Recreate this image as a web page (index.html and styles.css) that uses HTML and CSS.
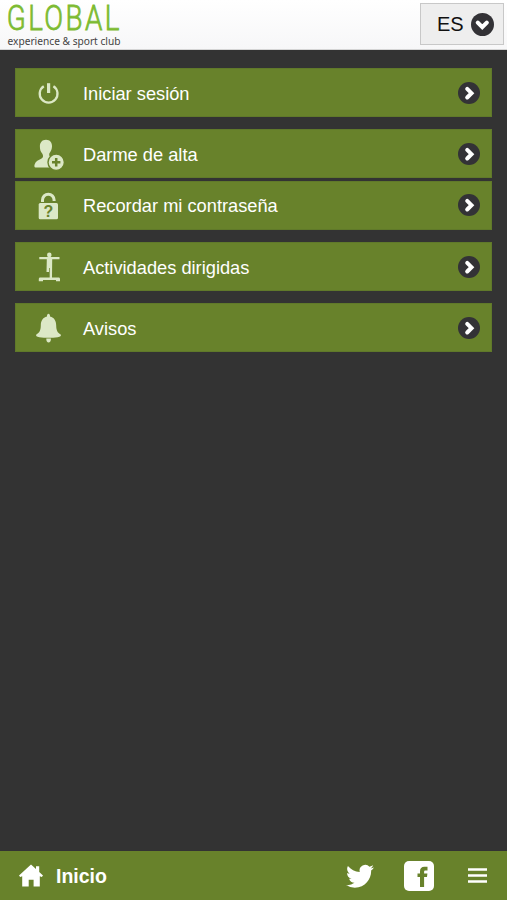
FILE: index.html
```html
<!DOCTYPE html>
<html lang="es">
<head>
<meta charset="utf-8">
<title>Global experience &amp; sport club</title>
<link rel="stylesheet" href="styles.css">
</head>
<body>
<svg width="0" height="0" class="defs">
  <symbol id="arrow" viewBox="0 0 22 22">
    <circle cx="11" cy="11" r="11" fill="#333236"/>
    <path d="M9.200 6.900l4.300 4.300-4.300 4.300" fill="none" stroke="#fff" stroke-width="4" stroke-linecap="round"/>
  </symbol>
</svg>
<header class="header">
  <svg class="logo" width="124" height="50" viewBox="0 0 124 50">
    <text class="logo-name" x="6.800" y="29.800" textLength="115" lengthAdjust="spacingAndGlyphs">GLOBAL</text>
    <text class="logo-tag" x="7.500" y="44.500" textLength="113" lengthAdjust="spacingAndGlyphs">experience &amp; sport club</text>
  </svg>
  <button class="lang">ES
    <svg width="23" height="23" viewBox="0 0 22 22"><g transform="rotate(90 11 11)"><use href="#arrow" width="22" height="22"/></g></svg>
  </button>
</header>
<main class="menu">
  <a class="row">
    <svg class="icon" width="34" height="34" viewBox="0 0 34 34" fill="none" stroke="#dce8c6" stroke-width="2.300"><path d="M11.800 9.200a8.900 8.900 0 1 0 9.600 0"/><path d="M16.600 6.200v9.800" stroke-width="3.200"/></svg>
    <span>Iniciar sesión</span><svg class="go"><use href="#arrow"/></svg>
  </a>
  <a class="row">
    <svg class="icon" width="34" height="34" viewBox="0 0 34 34" fill="#dce8c6"><path d="M14 1.700c4 0 6.300 2.800 6 7-.2 3.400-1.600 5.300-2.700 6.800-.5 2.200.3 3 2.200 3.600l3 1v9.400H3.500c-1.200 0-1.400-1.500-.8-3.200.9-3.200 4-4.500 6.500-5.600 2.300-1 2.300-3 1-5.200C8.500 13.500 7.900 11.500 7.900 8.500c0-4 2.100-6.800 6.100-6.800z"/><circle cx="24.200" cy="24.200" r="8.200" stroke="#68822b" stroke-width="1.400"/><path d="M24.200 20v8.400M20 24.200h8.400" stroke="#68822b" stroke-width="2.500"/></svg>
    <span>Darme de alta</span><svg class="go"><use href="#arrow"/></svg>
  </a>
  <a class="row joined">
    <svg class="icon" width="34" height="34" viewBox="0 0 34 34" fill="#dce8c6"><path d="M10.500 13v-2a5.800 5.800 0 0 1 11.600 0v1" fill="none" stroke="#dce8c6" stroke-width="3"/><rect x="6.700" y="14" width="19.300" height="16.300" rx="1.500"/><text class="lock-mark" x="16.400" y="28.200" text-anchor="middle">?</text></svg>
    <span>Recordar mi contraseña</span><svg class="go"><use href="#arrow"/></svg>
  </a>
  <a class="row">
    <svg class="icon" width="34" height="34" viewBox="0 0 34 34" fill="#dce8c6"><circle cx="17.300" cy="3.900" r="2.300"/><path d="M7.300 6h20.200v2.300h-7.300L20 26.500h6.500c1 0 1.500.6 1.500 1.600v2.200h-4v-1.200H11v1.200H6.800v-2.200c0-1 .5-1.600 1.500-1.600H17.700V17h-.7v4h-2.500l.3-12.700H7.300z"/></svg>
    <span>Actividades dirigidas</span><svg class="go"><use href="#arrow"/></svg>
  </a>
  <a class="row">
    <svg class="icon" width="34" height="34" viewBox="0 0 34 34" fill="#dce8c6"><path d="M15 4.400c-.3-3.400 3.300-3.400 3 0 4.400 1 6.100 4.500 6.200 9 .1 4.800 1.300 7.300 4.500 9 .8 1.200-.4 2.400-3 2.800-6 .8-12.400.8-18.400 0-2.600-.4-3.800-1.600-3-2.800 3.200-1.700 4.400-4.200 4.500-9 .1-4.500 1.800-8 6.200-9z"/><path d="M14.300 26.600h4.600c.5 5.200-5.100 5.200-4.600 0z"/></svg>
    <span>Avisos</span><svg class="go"><use href="#arrow"/></svg>
  </a>
</main>
<footer class="footer">
  <svg class="home" width="24" height="23" viewBox="0 0 24 23" fill="#fff"><path d="M12 .4l5 4.600V2.200h3.200V8L24 11.500l-1.200 1.400-2-.6V22.400h-6.200v-6.700H9.700v6.700H3.200V12.300l-2 .6L0 11.500z"/></svg>
  <span class="home-label">Inicio</span>
  <svg class="twitter" width="28" height="24" viewBox="0 1.500 24 20.500" preserveAspectRatio="none" fill="#fff"><path d="M23.950 4.570a10 10 0 0 1-2.820.77 4.960 4.960 0 0 0 2.160-2.720c-.95.550-2 .950-3.130 1.180a4.920 4.920 0 0 0-8.380 4.480C7.690 8.090 4.070 6.130 1.640 3.160a4.820 4.820 0 0 0-.67 2.480c0 1.710.87 3.210 2.190 4.100a4.900 4.900 0 0 1-2.230-.62v.060a4.920 4.920 0 0 0 3.950 4.830 5 5 0 0 1-2.210.080 4.940 4.940 0 0 0 4.600 3.420A9.870 9.870 0 0 1 0 19.540a14 14 0 0 0 7.550 2.210c9.050 0 14-7.500 14-13.980 0-.21 0-.42-.02-.63a9.940 9.940 0 0 0 2.420-2.570z"/></svg>
  <svg class="facebook" width="30" height="30" viewBox="0 0 30 30"><rect width="30" height="30" rx="5" fill="#fff"/><path d="M16 26V16h-2.500v-3.500H16V10.500c0-3.200 1.600-4.700 4.300-4.700h3.200v3.700h-2c-1 0-1.400.4-1.400 1.400v1.600h3.300l-.4 3.500h-2.900V26z" fill="#68822b"/></svg>
  <svg class="burger" width="19" height="15" viewBox="0 0 19 15"><path d="M0 1.500h19M0 7.500h19M0 13.500h19" stroke="#fff" stroke-width="2.400"/></svg>
</footer>
</body>
</html>
```

FILE: styles.css
```css
* { box-sizing: border-box; }
body {
  margin: 0;
  height: 900px;
  display: flex;
  flex-direction: column;
  background: #333333;
  font-family: "Liberation Sans", Arial, sans-serif;
  color: #fff;
}
.defs { position: absolute; }
.header {
  height: 50px;
  display: flex;
  justify-content: space-between;
  align-items: flex-start;
  background: linear-gradient(#ffffff, #f7f7f8);
  border-bottom: 1px solid #d5d5d5;
}
.logo { display: block; overflow: visible; }
.logo-name { font: 300 35px Roboto, sans-serif; letter-spacing: 3px; fill: #7dbb32; stroke: #7dbb32; stroke-width: 0.8px; }
.logo-tag { font: 10px "Noto Sans", sans-serif; fill: #444; }
.lang {
  width: 84px;
  height: 42px;
  margin: 3px 3px 0 0;
  padding: 0 9px 0 16px;
  display: flex;
  align-items: center;
  justify-content: space-between;
  border: 1px solid #c8c8c8;
  background: #eeeeee;
  color: #111;
  font: 20px "Liberation Sans", Arial, sans-serif;
}
.menu { flex: 1; padding: 18px 15px 0; }
.row {
  height: 49px;
  margin-bottom: 12.3px;
  padding: 0 11px 0 16px;
  display: flex;
  align-items: center;
  background: #68822b;
  border: 1px solid #60792a;
  font-size: 18.25px;
}
.row:has(+ .joined) { margin-bottom: 2.5px; }
.row span { flex: 1; margin-left: 17px; padding-top: 2px; }
.icon { margin-top: 2px; }
.go { width: 22px; height: 22px; }
.lock-mark { font: bold 16px "Liberation Sans", Arial, sans-serif; fill: #68822b; }
.footer {
  height: 49px;
  padding: 0 20px 0 19px;
  display: flex;
  align-items: center;
  background: #68822b;
}
.home-label { margin-left: 13px; padding-top: 2px; font-size: 19.5px; font-weight: bold; }
.twitter { margin-left: auto; }
.facebook { margin-left: 30px; }
.burger { margin-left: 34px; }
```
